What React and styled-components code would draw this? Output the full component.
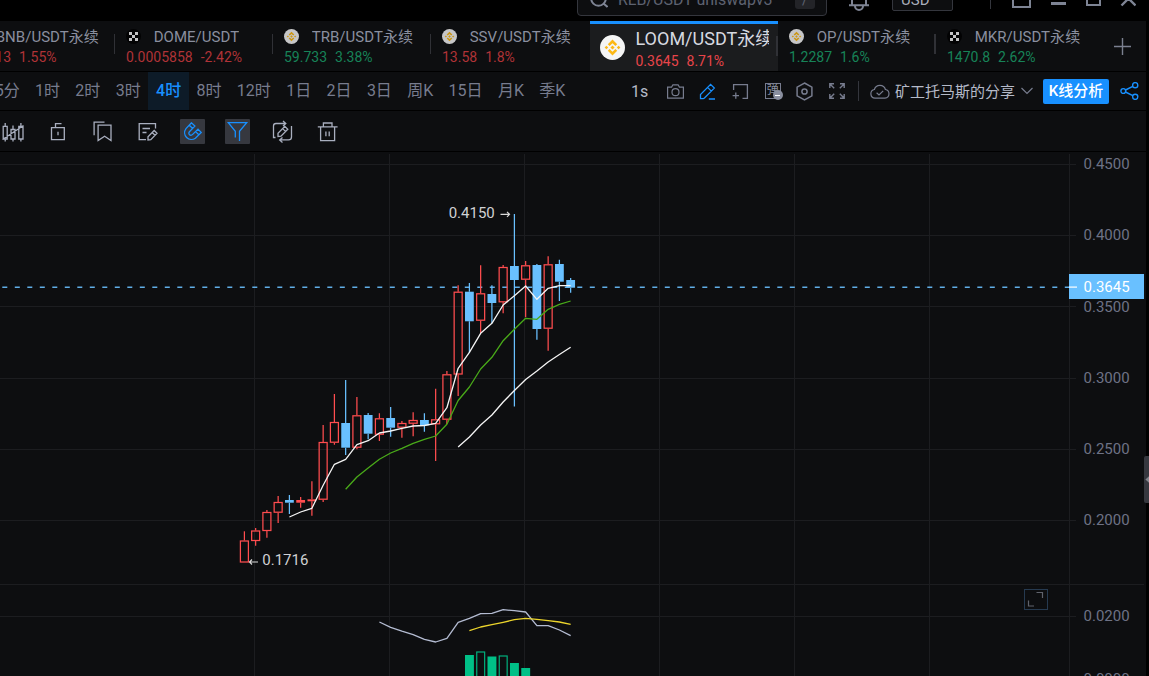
import React from 'react';
import styled, { createGlobalStyle } from 'styled-components';

const upColor = '#ff4d4f';
const downColor = '#69c0ff';

const tabs = [
  { name: 'BNB/USDT永续', price: '213.13', rate: '1.55%', tone: 'red', logo: 'binance' },
  { name: 'DOME/USDT', price: '0.0005858', rate: '-2.42%', tone: 'red', logo: 'okx' },
  { name: 'TRB/USDT永续', price: '59.733', rate: '3.38%', tone: 'green', logo: 'binance' },
  { name: 'SSV/USDT永续', price: '13.58', rate: '1.8%', tone: 'red', logo: 'binance' },
  { name: 'LOOM/USDT永续', price: '0.3645', rate: '8.71%', tone: 'red', logo: 'binance', active: true },
  { name: 'OP/USDT永续', price: '1.2287', rate: '1.6%', tone: 'green', logo: 'binance', bar: 2 },
  { name: 'MKR/USDT永续', price: '1470.8', rate: '2.62%', tone: 'green', logo: 'okx', last: true },
];

const periods = ['5分', '1时', '2时', '3时', '4时', '8时', '12时', '1日', '2日', '3日', '周K', '15日', '月K', '季K'];

// [up, bodyTop, bodyBottom, high, low]
const candles = [
  [1, 540.5, 562.5, 531.3, 562],
  [1, 530.5, 541, 528, 545.7],
  [1, 512, 531, 510, 537.7],
  [1, 502, 512.7, 496, 523],
  [0, 500, 502.7, 495, 514],
  [1, 500, 502.7, 497, 507.7],
  [1, 499.3, 501.3, 481.3, 515.7],
  [1, 442, 499.7, 425, 502],
  [1, 422, 442.7, 394, 444.7],
  [0, 423, 447.7, 380, 455],
  [1, 415.3, 447.7, 397, 449.3],
  [0, 415, 433.7, 413, 439.3],
  [1, 418.3, 434.7, 413.3, 441],
  [0, 418, 427.7, 407, 436.7],
  [1, 423, 427.7, 421, 437.7],
  [1, 420, 423.7, 412.3, 436.3],
  [0, 420, 425.3, 413.3, 431.7],
  [1, 419.3, 424.3, 388.7, 461],
  [1, 374.3, 419.7, 371, 424],
  [1, 291.7, 374.5, 285.3, 396],
  [0, 291.7, 321.3, 283, 353],
  [1, 293.3, 320.7, 265.3, 333],
  [0, 294, 303, 285.3, 323.3],
  [1, 267, 302.3, 265, 313.3],
  [0, 266, 280, 214, 406.5],
  [1, 265.3, 279.7, 261, 317.3],
  [0, 265, 329, 264, 339.7],
  [1, 264.3, 328.7, 256.3, 350.7],
  [0, 264, 281.7, 259.7, 301],
  [0, 280, 287.7, 278, 292.7],
];

const lines = [
  {
    color: '#f5f5f5',
    from: 4,
    data: [517, 512, 508.3, 485.3, 464.3, 459.3, 444.7, 440.7, 433, 431, 428.3, 426, 425.5, 423.3, 407.7, 368.3, 352.3, 333.3, 323.3, 305, 295.7, 286, 299.3, 288.3, 285.6, 285.6],
  },
  {
    color: '#49aa19',
    from: 9,
    data: [489.3, 477, 468, 459.3, 453, 448.3, 443.3, 439.3, 436, 424.3, 400.5, 387, 369, 357.3, 340.7, 329.3, 318.3, 319.3, 309.3, 304.3, 301],
  },
  { color: '#f5f5f5', from: 19, data: [447, 437, 425, 415, 402, 390.5, 379.5, 371, 362, 354.5, 347.3] },
  {
    color: '#b4bcd2',
    from: 12,
    data: [622, 627.3, 631.2, 634.7, 639.3, 642, 638.3, 622.3, 618.3, 613.7, 613.3, 609.7, 610.7, 612, 625.7, 625.7, 630, 635.7],
  },
  { color: '#ecd52c', from: 20, data: [630.7, 627, 624.7, 622.3, 619.7, 618.4, 619.3, 620.7, 622, 624.3] },
];

const bars = [
  [655, true],
  [651.5, false],
  [656.5, true],
  [655.5, false],
  [663, true],
  [668, true],
];

const priceLabels = [
  ['0.4500', 164],
  ['0.4000', 235],
  ['0.3500', 307],
  ['0.3000', 378],
  ['0.2500', 449],
  ['0.2000', 520],
  ['0.0200', 616.4],
  ['0.0000', 679],
];

const centerX = (i) => 244.4 + i * 11.25;

const BinanceLogo = ({ size }) => (
  <svg width={size} height={size} viewBox='0 0 25 25'>
    <circle cx='12.5' cy='12.5' r='12.5' fill='#f5f5f5' />
    <g fill='#fcb814'>
      <path d='M12.5 4.6l4.7 4.6-1.8 1.8-2.9-2.8L9.6 11 7.8 9.2z' />
      <path d='M12.5 20.4l-4.7-4.6L9.6 14l2.9 2.8 2.9-2.8 1.8 1.8z' />
      <path d='M12.5 10.4l2.1 2.1-2.1 2.1-2.1-2.1z' />
      <path d='M6.4 10.7l1.8 1.8-1.8 1.8-1.8-1.8z' />
      <path d='M18.6 10.7l1.8 1.8-1.8 1.8-1.8-1.8z' />
    </g>
  </svg>
);

const OkxLogo = ({ size }) => (
  <svg width={size} height={size} viewBox='0 0 15 15'>
    <circle cx='7.5' cy='7.5' r='7.5' fill='#000' />
    <path d='M3 3h3v3H3zM9 3h3v3H9zM6 6h3v3H6zM3 9h3v3H3zM9 9h3v3H9z' fill='#f0f0f0' />
  </svg>
);

const Tab = ({ tab }) => (
  <TabBox $active={tab.active}>
    {tab.active ? (
      <>
        <BinanceLogo size={25} />
        <ActiveInfo>
          <TabName $active>{tab.name}</TabName>
          <PriceRow $tone={tab.tone} $active>
            <span>{tab.price}</span>
            <span>{tab.rate}</span>
          </PriceRow>
        </ActiveInfo>
        <TabDivider $width={2} />
      </>
    ) : (
      <>
        <TabInfo>
          <NameRow>
            {tab.logo === 'okx' ? <OkxLogo size={15} /> : <BinanceLogo size={15} />}
            <TabName>{tab.name}</TabName>
          </NameRow>
          <PriceRow $tone={tab.tone}>
            <span>{tab.price}</span>
            <span>{tab.rate}</span>
          </PriceRow>
        </TabInfo>
        {!tab.last && tab.name !== 'SSV/USDT永续' && <TabDivider $width={tab.bar || 1} />}
      </>
    )}
  </TabBox>
);

const Chart = () => (
  <ChartSvg viewBox='0 152 1146 524' width='1146' height='524'>
    <g fill='#1c1d20'>
      {[254, 389, 524, 659, 794, 929, 1069].map((x) => (
        <rect key={x} x={x} y='154' width='1' height='522' />
      ))}
      {[164, 235, 306, 378, 449, 520, 616].map((y) => (
        <rect key={y} x='0' y={y} width='1076' height='1' />
      ))}
      <rect x='0' y='584' width='1144' height='1' />
    </g>

    <path d='M-10.2 287.2H1069' stroke={downColor} strokeWidth='1.6' strokeDasharray='5 7.5' fill='none' opacity='0.9' />

    {candles.map(([up, top, bottom, high, low], i) => {
      const x = centerX(i);
      const color = up ? upColor : downColor;
      const hollow = up && bottom - top > 3;
      return (
        <g key={i} stroke={color} strokeWidth='1.25'>
          <path d={`M${x} ${high}V${top}M${x} ${bottom}V${Math.max(low, bottom)}`} />
          {hollow ? (
            <rect x={x - 4} y={top + 0.5} width='8' height={bottom - top - 1} fill='none' />
          ) : (
            <rect x={x - 4.4} y={top} width='8.8' height={bottom - top} fill={color} stroke='none' />
          )}
        </g>
      );
    })}

    {lines.map(({ color, from, data }, i) => (
      <polyline
        key={i}
        points={data.map((y, j) => `${centerX(from + j)},${y}`).join(' ')}
        stroke={color}
        strokeWidth='1.3'
        strokeLinejoin='round'
        fill='none'
      />
    ))}

    {bars.map(([top, filled], i) => (
      <rect
        key={i}
        x={centerX(20 + i) - (filled ? 4.4 : 3.9)}
        y={filled ? top : top + 0.5}
        width={filled ? 8.9 : 7.9}
        height='40'
        fill={filled ? '#00c087' : 'none'}
        stroke={filled ? 'none' : '#00b07c'}
        strokeWidth='1.2'
      />
    ))}

    <g stroke='#d9d9d9' strokeWidth='1.2' fill='none'>
      <path d='M500.5 214.3H509.5M507 211.8L509.5 214.3L507 216.8' />
      <path d='M249.5 562H258M252 559.5L249.5 562L252 564.5' />
    </g>
    <g fill='#d0d1d4' fontSize='15'>
      <text x='448.7' y='218'>0.4150</text>
      <text x='262.3' y='565'>0.1716</text>
    </g>

    <g fill='#6e7285' fontSize='15'>
      {priceLabels.map(([label, y]) => (
        <text key={label} x='1083.5' y={y + 5}>
          {label}
        </text>
      ))}
    </g>
    <rect x='1069' y='274' width='75' height='25' fill={downColor} />
    <rect x='1069' y='286.5' width='8' height='1.2' fill='#fff' />
    <text x='1083.5' y='292' fontSize='15' fill='#fff'>
      0.3645
    </text>

    <rect x='1024.5' y='589.5' width='23' height='20' fill='none' stroke='#263a50' />
    <path d='M1036.5 592.5H1042.5V598M1028.5 600.5V606H1034' fill='none' stroke='#60636c' strokeWidth='1.2' />
  </ChartSvg>
);

const App = () => {
  return (
    <>
      <GlobalStyle />
      <Page>
        <TitleClip>
          <TitleBar>
            <SearchBox>
              <svg width='18' height='18' viewBox='0 0 18 18' fill='none' stroke='#7e8494' strokeWidth='2'>
                <circle cx='8.5' cy='8.5' r='7.3' />
                <path d='M13.5 13.5l4 3.5' />
              </svg>
              <SearchText>RLB/USDT uniswapv3</SearchText>
              <KeyHint>/</KeyHint>
            </SearchBox>
            <BellIcon width='20' height='22' viewBox='0 0 20 22' fill='none' stroke='#7e8494' strokeWidth='2'>
              <path d='M3 16V9a7 7 0 0 1 14 0v7M0 16.2h20M6 17a4 4 0 0 0 8 0' />
            </BellIcon>
            <Currency>
              USD
              <i />
            </Currency>
            <TitleDivider />
            <WindowIcons width='124' height='20' viewBox='0 0 124 20' fill='none' stroke='#7e8494' strokeWidth='2'>
              <path d='M1 0V17H18V0' />
              <path d='M39 13.5h15' strokeWidth='3' />
              <path d='M75 0V15H88V0' />
              <path d='M109.5 15.5L124 1M123.5 15.5L109 1' strokeWidth='2.4' />
            </WindowIcons>
          </TitleBar>
        </TitleClip>

        <TabBar>
          {tabs.map((tab) => (
            <Tab key={tab.name} tab={tab} />
          ))}
          <AddButton width='17' height='17' viewBox='0 0 17 17' stroke='#7b8090' strokeWidth='1.4'>
            <path d='M8.5 0V17M0 8.5H17' />
          </AddButton>
        </TabBar>

        <PeriodBar>
          <PeriodList>
            {periods.map((period) => (
              <Period key={period} $active={period === '4时'}>
                {period}
              </Period>
            ))}
          </PeriodList>
          <Tools>
            <Refresh>1s</Refresh>
            <svg width='17' height='15' viewBox='0 0 17 15' fill='none' stroke='#777c8e' strokeWidth='1.2'>
              <path d='M.6 3.1H4.6L5.9.8H11.1L12.4 3.1H16.4V14.2H.6Z' />
              <circle cx='8.5' cy='8.2' r='3.5' />
            </svg>
            <svg width='17' height='17' viewBox='0 0 17 17' fill='none' stroke='#1890ff' strokeWidth='1.3'>
              <path d='M1.5 15.7V11.6L11.6 1.4L15.3 5.1L5.2 15.2Q4.8 15.7 4.2 15.7ZM8.6 4.4L12.3 8.1M9.8 16H16' />
            </svg>
            <svg width='17' height='17' viewBox='0 0 17 17' fill='none' stroke='#777c8e' strokeWidth='1.3'>
              <path d='M1.6 7V1.6H15.4V15.4H10.5M3.8 9.5V15.8M.6 12.6H7' />
            </svg>
            <BulletIcon>
              弹
              <Badge />
            </BulletIcon>
            <svg width='17' height='19' viewBox='0 0 17 19' fill='none' stroke='#777c8e' strokeWidth='1.5'>
              <path d='M8.5 1L15.9 5.2V13.8L8.5 18L1.1 13.8V5.2Z' />
              <circle cx='8.5' cy='9.5' r='2.6' />
            </svg>
            <svg width='16' height='16' viewBox='0 0 16 16' fill='none' stroke='#777c8e' strokeWidth='1.4'>
              <path d='M.8 5V.8H5M11 .8H15.2V5M15.2 11V15.2H11M5 15.2H.8V11M1 1L5.2 5.2M15 1L10.8 5.2M15 15L10.8 10.8M1 15L5.2 10.8' />
            </svg>
          </Tools>
          <ToolDivider />
          <Share>
            <svg width='20' height='15' viewBox='0 0 20 15' fill='none' stroke='#777c8e' strokeWidth='1.2'>
              <path d='M5 14.2A4.4 4.4 0 0 1 4.4 5.5A5.7 5.7 0 0 1 15.4 5.5A4.4 4.4 0 0 1 15 14.2ZM6.6 8.8L9 11L13.2 6.8' />
            </svg>
            <span>矿工托马斯的分享</span>
            <svg width='12' height='8' viewBox='0 0 12 8' fill='none' stroke='#777c8e' strokeWidth='1.2'>
              <path d='M.5 1L6 6.5L11.5 1' />
            </svg>
          </Share>
          <AnalyseButton>K线分析</AnalyseButton>
          <svg width='19' height='18' viewBox='0 0 19 18' fill='none' stroke='#1890ff' strokeWidth='1.4'>
            <circle cx='3.3' cy='9' r='2.4' />
            <circle cx='15.2' cy='3.2' r='2.6' />
            <circle cx='15.2' cy='14.8' r='2.6' />
            <path d='M5.5 8L12.8 4.4M5.5 10L12.8 13.6' />
          </svg>
        </PeriodBar>

        <DrawBar>
          <DrawTool>
            <svg width='25' height='25' viewBox='0 0 25 25'>
              <path d='M3.2 7.3H7.2V20H3.2ZM11 10.5H15V20H11ZM18.8 7.3H23V20H18.8ZM5.2 4V7.3M5.2 20V22.5M13 6.5V10.5M13 20V22.5M20.9 4V7.3M20.9 20V22.5M2.5 20.5L23.5 6.5' />
            </svg>
          </DrawTool>
          <DrawTool>
            <svg width='25' height='25' viewBox='0 0 25 25'>
              <path d='M6.5 8.6H19.3V20.6H6.5ZM10.5 8.6V4.6H16.5M13 12.7V16.3' />
            </svg>
          </DrawTool>
          <DrawTool>
            <svg width='25' height='25' viewBox='0 0 25 25'>
              <path d='M8.1 6.2H21V21.6L14.6 17.2L8.1 21.6ZM4.1 16.3V3.1H14.5' />
            </svg>
          </DrawTool>
          <DrawTool>
            <svg width='25' height='25' viewBox='0 0 25 25'>
              <path d='M20.5 9.5V4.6H4.2V20.6H11M7.5 9.5H15M7.5 13.5H11.5M13 21V17.8L19.2 11.5L22 14.3L15.8 20.6ZM17.2 13.5L20 16.3' />
            </svg>
          </DrawTool>
          <DrawTool $active>
            <svg width='25' height='25' viewBox='0 0 25 25'>
              <path d='M11.5 3.8L6 9.6A6.8 6.8 0 0 0 15.4 19.2L21.2 13.4L18 10.2L12.4 15.6A2 2 0 0 1 9.4 12.8L14.9 7.1ZM9.3 6.2L12.7 9.5M15.6 12.6L18.8 15.8' />
            </svg>
          </DrawTool>
          <DrawTool $active>
            <svg width='25' height='25' viewBox='0 0 25 25'>
              <path d='M10.3 18.5V12.3L3.3 3.7H21.7L14.5 12.3V22' />
            </svg>
          </DrawTool>
          <DrawTool>
            <svg width='25' height='25' viewBox='0 0 25 25'>
              <path d='M15.5 4.5H6Q3.5 4.5 3.5 7V18.5H5.5M13 2L15.8 4.5L13 7M10 20.9H18.5Q21.5 20.9 21.5 18V7M12.5 18.5L9.7 20.9L12.5 23.4M8 17.5V14.3L14.8 7.3L17.8 10.2L11 17.2ZM12.6 9.6L15.5 12.4' />
            </svg>
          </DrawTool>
          <DrawTool>
            <svg width='25' height='25' viewBox='0 0 25 25'>
              <path d='M2.8 7.8H22.6M5.6 7.8V21.6H19.6V7.8M8.4 7.8V4H17V7.8M10.9 12.5V17.3M14.2 12.5V17.3' />
            </svg>
          </DrawTool>
        </DrawBar>

        <ChartArea>
          <Chart />
          <SideHandle>
            <svg width='4' height='7' viewBox='0 0 5 8'>
              <path d='M5 0V8L.5 4Z' fill='#85878f' />
            </svg>
          </SideHandle>
        </ChartArea>
      </Page>
    </>
  );
};

export default App;

const GlobalStyle = createGlobalStyle`
  * {
    box-sizing: border-box;
  }
  body {
    margin: 0;
    background: #000;
    overflow: hidden;
    font-family: Roboto, 'Noto Sans CJK SC', sans-serif;
  }
  svg {
    flex-shrink: 0;
    display: block;
  }
`;

const Page = styled.div`
  display: flex;
  flex-direction: column;
  width: 1149px;
  height: 676px;
  overflow: hidden;
  background: #000;
`;

const TitleClip = styled.header`
  display: flex;
  align-items: flex-end;
  height: 21px;
  overflow: hidden;
  flex-shrink: 0;
`;

const TitleBar = styled.div`
  display: flex;
  align-items: flex-end;
  height: 41px;
  width: 100%;
  padding-left: 577px;
`;

const SearchBox = styled.div`
  display: flex;
  align-items: center;
  width: 250px;
  height: 36px;
  margin-bottom: 5px;
  padding: 4px 11px 0 12px;
  background: #0d0e10;
  border: 1px solid #34363d;
  border-radius: 4px;

  svg {
    margin-bottom: 2px;
  }
`;

const SearchText = styled.span`
  flex: 1;
  margin-left: 10px;
  font-size: 16px;
  line-height: 20px;
  color: #5d6270;
`;

const KeyHint = styled.span`
  width: 20px;
  height: 20px;
  margin-bottom: 2px;
  border-radius: 3px;
  background: #232428;
  color: #5d6270;
  font-size: 14px;
  line-height: 22px;
  text-align: center;
`;

const BellIcon = styled.svg`
  margin: 0 0 10px 22px;
`;

const Currency = styled.div`
  display: flex;
  align-items: center;
  width: 61px;
  height: 28px;
  margin: 0 0 10px 23px;
  padding: 6px 0 0 8px;
  border: 1px solid #34363d;
  border-radius: 2px;
  background: #0d0e10;
  color: #a9adba;
  font-size: 15px;

  i {
    width: 3px;
    height: 3px;
    margin: 0 0 4px 9px;
    background: #44474f;
  }
`;

const TitleDivider = styled.div`
  width: 1px;
  height: 20px;
  margin: 0 0 12px 37px;
  background: #34363d;
`;

const WindowIcons = styled.svg`
  margin: 0 0 11px 21px;
`;

const TabBar = styled.nav`
  display: flex;
  align-items: center;
  width: 1146px;
  height: 50px;
  margin-bottom: 1px;
  background: #0d0e10;
  overflow: hidden;
  flex-shrink: 0;

  & > :first-child {
    margin-left: -43px;
  }
`;

const TabBox = styled.div`
  display: flex;
  align-items: center;
  flex-shrink: 0;
  width: ${({ $active }) => ($active ? 188 : 158)}px;
  height: 50px;
  margin-left: ${({ $active }) => ($active ? 1 : 0)}px;
  padding: ${({ $active }) => ($active ? '0 0 0 10px' : '0 0 0 11px')};
  border-top: ${({ $active }) => ($active ? '3px solid #1890ff' : 'none')};
  background: ${({ $active }) => ($active ? '#1b1c1e' : 'transparent')};

  svg {
    opacity: ${({ $active }) => ($active ? 1 : 0.8)};
  }
`;

const TabInfo = styled.div`
  flex: 1;
  padding-top: 1px;
`;

const NameRow = styled.div`
  display: flex;
  align-items: center;
  gap: 12.7px;
  height: 20px;
`;

const ActiveInfo = styled.div`
  width: 133px;
  margin-left: 10.5px;
  padding-top: 2px;
  overflow: hidden;
`;

const TabName = styled.div`
  overflow: hidden;
  white-space: nowrap;
  font-size: ${({ $active }) => ($active ? 18 : 15)}px;
  line-height: ${({ $active }) => ($active ? 24 : 20)}px;
  letter-spacing: ${({ $active }) => ($active ? 0 : 0.03)}px;
  color: ${({ $active }) => ($active ? '#d6d9e0' : '#8a8f9f')};
`;

const PriceRow = styled.div`
  display: flex;
  gap: 8px;
  font-size: 14px;
  line-height: 20px;
  color: ${({ $tone, $active }) => {
    if ($tone === 'green') return '#178358';
    return $active ? '#e8454a' : '#b03337';
  }};
`;

const TabDivider = styled.div`
  width: ${({ $width }) => $width}px;
  height: 20px;
  margin-left: auto;
  margin-bottom: 4px;
  background: #303136;
`;

const AddButton = styled.svg`
  margin-left: 20px;
`;

const PeriodBar = styled.div`
  display: flex;
  align-items: center;
  width: 1146px;
  height: 38px;
  margin-bottom: 1px;
  background: #0d0e10;
  overflow: hidden;
  flex-shrink: 0;
`;

const PeriodList = styled.div`
  display: flex;
  width: 645px;
  margin-left: -13px;
  flex-shrink: 0;
`;

const Period = styled.div`
  height: 38px;
  padding: 0 7.68px;
  font-size: 16px;
  line-height: 37px;
  white-space: nowrap;
  font-weight: ${({ $active }) => ($active ? 500 : 400)};
  color: ${({ $active }) => ($active ? '#1890ff' : '#777c8e')};
  background: ${({ $active }) => ($active ? '#0d1b28' : 'transparent')};
`;

const Tools = styled.div`
  display: flex;
  align-items: center;
  gap: 15.7px;
  width: 227px;
  flex-shrink: 0;
  margin-left: -1px;
`;

const Refresh = styled.span`
  width: 20px;
  font-size: 16px;
  color: #b5bac8;
`;

const BulletIcon = styled.div`
  position: relative;
  width: 16px;
  height: 16px;
  border: 1px solid #777c8e;
  font-size: 12px;
  line-height: 13px;
  text-align: center;
  color: #8a8f9f;
`;

const Badge = styled.i`
  position: absolute;
  right: -3px;
  bottom: -2px;
  display: flex;
  align-items: center;
  justify-content: center;
  width: 10px;
  height: 10px;
  border-radius: 50%;
  background: #8a8f9f;

  &::after {
    content: '';
    width: 5px;
    height: 1px;
    background: #fff;
  }
`;

const ToolDivider = styled.div`
  width: 1px;
  height: 20px;
  margin-right: 11px;
  background: #34363d;
`;

const Share = styled.div`
  display: flex;
  align-items: center;
  width: 173px;
  flex-shrink: 0;
  font-size: 15px;
  color: #b5bac8;

  span {
    margin: 0 6px 2px 5px;
    white-space: nowrap;
  }
`;

const AnalyseButton = styled.button`
  width: 66px;
  height: 25px;
  margin-right: 11px;
  padding: 0;
  border: none;
  border-radius: 2px;
  background: #1890ff;
  color: #fff;
  font-family: inherit;
  font-size: 15px;
  font-weight: 500;
  line-height: 25px;
  flex-shrink: 0;
`;

const DrawBar = styled.div`
  display: flex;
  align-items: center;
  gap: 20px;
  width: 1146px;
  height: 40px;
  margin-bottom: 1px;
  background: #0d0e10;
  overflow: hidden;
  flex-shrink: 0;
`;

const DrawTool = styled.div`
  width: 25px;
  height: 25px;
  flex-shrink: 0;
  border-radius: 1px;
  background: ${({ $active }) => ($active ? '#36383f' : 'transparent')};

  svg {
    fill: none;
    stroke: ${({ $active }) => ($active ? '#1890ff' : '#a9afbf')};
    stroke-width: 1.3;
  }
`;

const ChartArea = styled.main`
  display: flex;
  position: relative;
  height: 524px;
  width: 1149px;
  flex-shrink: 0;
`;

const ChartSvg = styled.svg`
  background: #0d0e10;
`;

// collapse handle lying over the right edge of the chart
const SideHandle = styled.div`
  position: absolute;
  top: 304px;
  right: 0;
  display: flex;
  align-items: center;
  justify-content: flex-end;
  width: 5px;
  height: 47px;
  border-radius: 2px 0 0 2px;
  background: #36383f;
`;
